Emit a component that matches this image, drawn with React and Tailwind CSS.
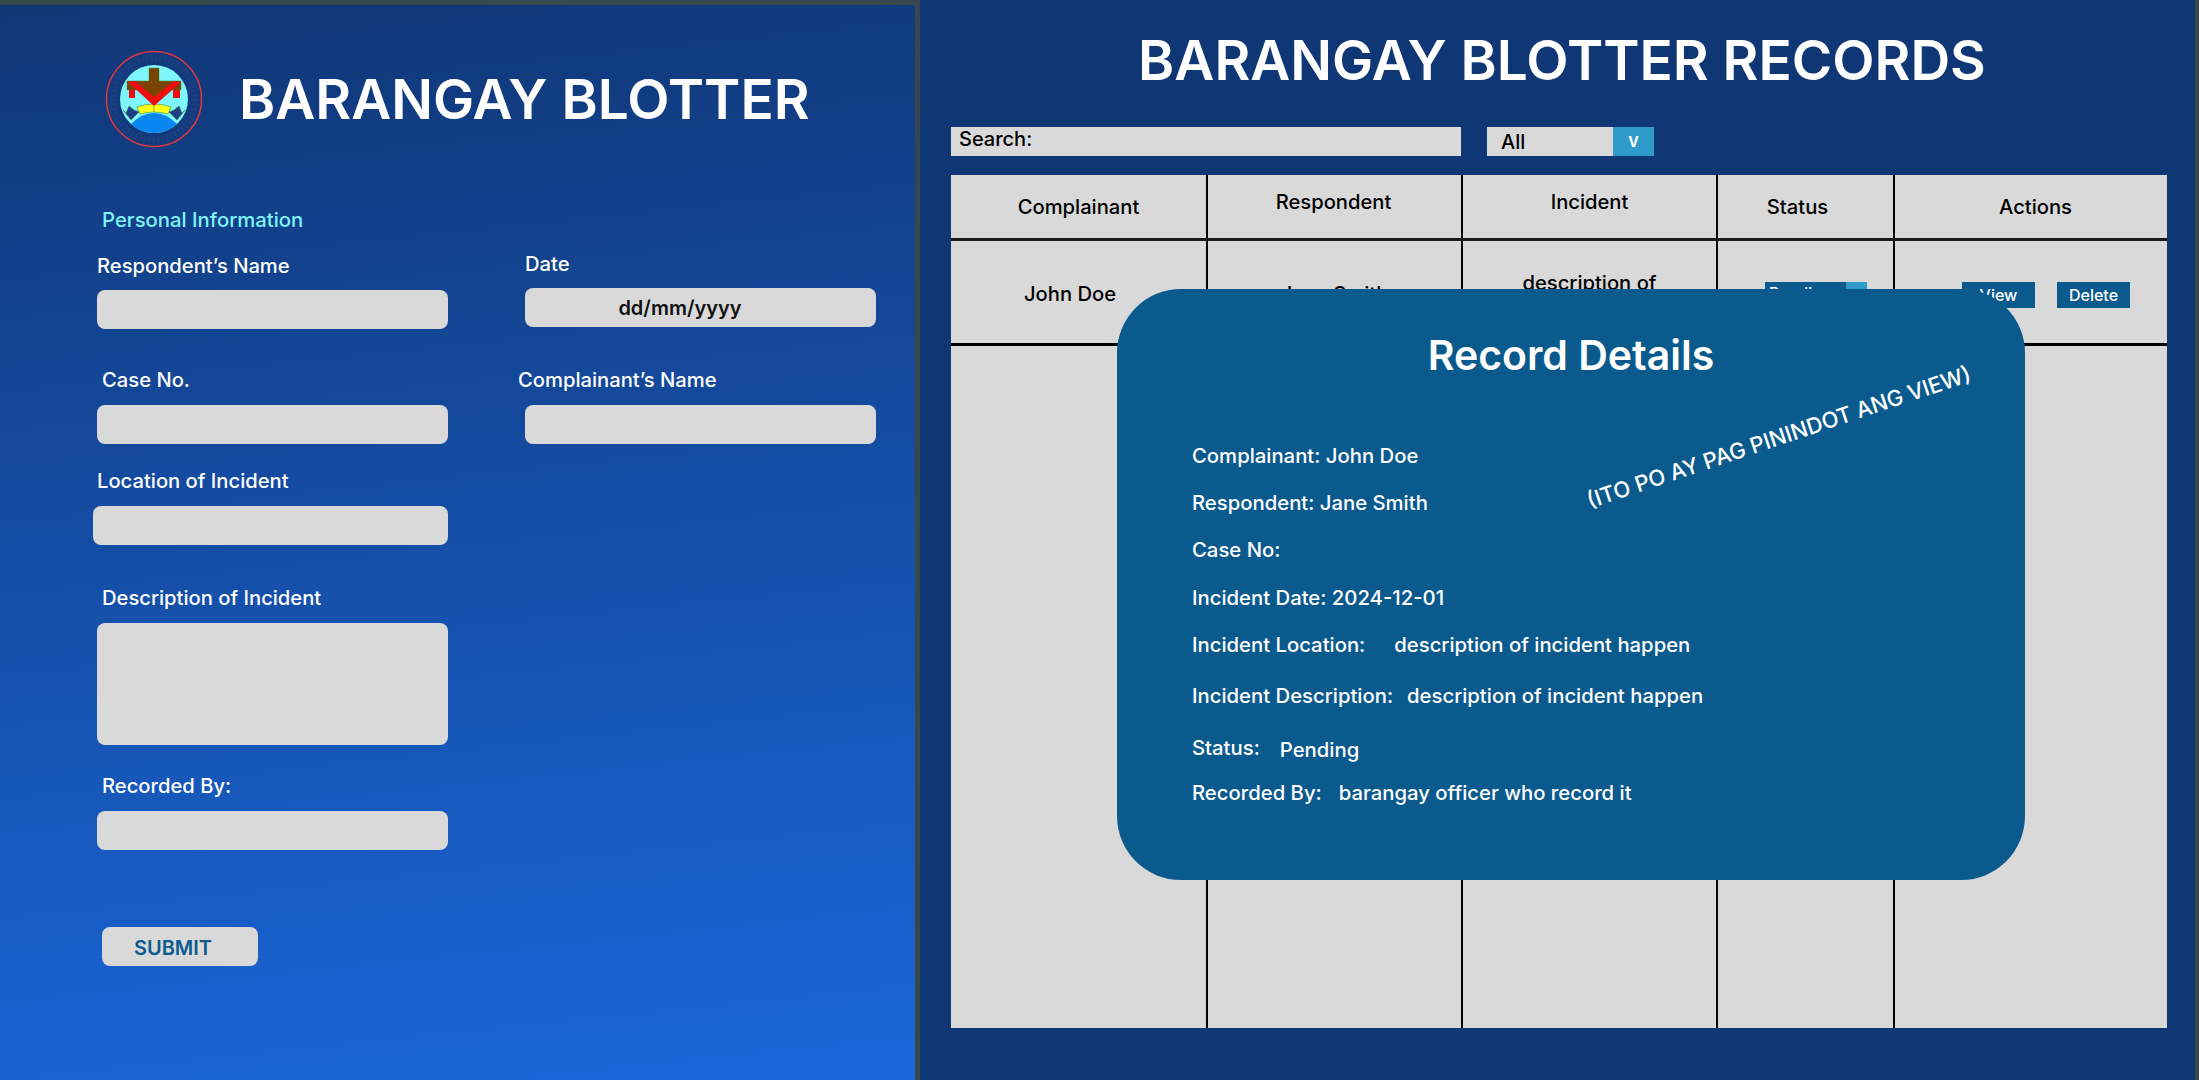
const font = { fontFamily: "Inter, sans-serif" };

const Logo = () => (
  <svg width="100" height="100" viewBox="0 0 100 100" className="shrink-0">
    <circle cx="50" cy="50" r="47.5" fill="#123a7c" stroke="#e0383e" strokeWidth="1.5" />
    <circle cx="50" cy="50" r="41" fill="none" stroke="#1a3f80" strokeWidth="7" strokeDasharray="3 1.5" />
    <circle cx="50" cy="50" r="34" fill="#7ff6fb" />
    <path d="M27 75 A34 34 0 0 0 73 75 Q62 64 50 64 Q38 64 27 75 Z" fill="#0a86f0" />
    <path d="M19 61 L22 64 L25 57 L30 61 L35 63 L27 71 Z M81 61 L78 64 L75 57 L70 61 L65 63 L73 71 Z" fill="#1d3f8a" stroke="#3f8a3a" strokeWidth="0.6" />
    <path d="M33 58 Q41 55 50 55 Q59 55 67 58 L64 65 Q57 63 50 63 Q43 63 36 65 Z" fill="#ffff1a" stroke="#3f8a3a" strokeWidth="0.6" />
    <path d="M50 55 V63" stroke="#3f8a3a" strokeWidth="0.6" />
    <path d="M45 19 H55 V32 H77 V41 H62 L50 52 L38 41 H23 V32 H45 Z" fill="#7a4300" stroke="#3f8a3a" strokeWidth="0.5" />
    <path d="M25 41 H31 V49 H25 Z M69 41 H76 V49 H69 Z" fill="#f00d0d" />
    <path d="M24 33 L31 32 L50 48 L70 32 L77 33 L50 57 Z" fill="#f00d0d" />
  </svg>
);

const Field = ({ label, className = "", labelClass = "", inputClass = "h-[39px]", children }) => (
  <div className={className}>
    <div className={`text-[20.2px] leading-[24px] font-[550] text-white ${labelClass}`}>{label}</div>
    <div className={`bg-[#d9d9d9] rounded-[8px] flex items-center justify-center ${inputClass}`}>
      {children}
    </div>
  </div>
);

const FormPanel = () => (
  <div className="w-[915px] h-[1075px] shrink-0 bg-linear-[174deg] from-[#103675] to-[#1a67da] flex flex-col">
    <div className="flex items-center pl-[104px] pt-[44px]">
      <Logo />
      <h1 className="ml-[35px] text-[55px] leading-[64px] font-semibold text-white">BARANGAY BLOTTER</h1>
    </div>
    <div className="ml-[102px] mt-[59px] text-[20.3px] leading-[24px] font-[550] text-[#7ef3f7]">Personal Information</div>
    <div className="grid grid-cols-[351px_351px] gap-x-[77px] ml-[97px] mt-[22px]">
      <Field label="Respondent’s Name" inputClass="h-[39px] mt-[12px]" />
      <Field label="Date" inputClass="h-[39px] mt-[12px]" className="-mt-[2px]">
        <span className="text-[20px] font-semibold text-[#111] pr-[41px]">dd/mm/yyyy</span>
      </Field>
      <Field label="Case No." labelClass="pl-[5px]" inputClass="h-[39px] mt-[13px]" className="mt-[39px]" />
      <Field label="Complainant’s Name" labelClass="-ml-[7px]" inputClass="h-[39px] mt-[13px]" className="mt-[39px]" />
    </div>
    <div className="ml-[97px] w-[351px]">
      <Field label="Location of Incident" inputClass="h-[39px] mt-[13px] -ml-[4px]" className="mt-[25px]" />
      <Field label="Description of Incident" labelClass="pl-[5px]" inputClass="h-[122px] mt-[13px]" className="mt-[41px]" />
      <Field label="Recorded By:" labelClass="pl-[5px]" inputClass="h-[39px] mt-[13px]" className="mt-[29px]" />
      <button className="mt-[77px] ml-[5px] w-[156px] h-[39px] pr-[14px] pt-[2px] rounded-[8px] bg-[#d9d9d9] text-[20px] font-semibold text-[#0b5a8e]">
        SUBMIT
      </button>
    </div>
  </div>
);

const Select = ({ label, className = "", labelClass = "", arrowClass = "" }) => (
  <div className={`flex items-stretch ${className}`}>
    <div className={`flex-1 flex items-center ${labelClass}`}>{label}</div>
    <div className={`bg-[#2e9bca] text-white flex items-center justify-center ${arrowClass}`}>V</div>
  </div>
);

const columns = "grid grid-cols-[257px_255px_255px_177px_272px]";

const TablePanel = () => (
  <div className="relative flex-1 h-[1080px] bg-[#0f3675] pl-[31px] pr-[27px] flex flex-col">
    <h1 className="pt-[28px] pl-[5px] text-center text-[55px] leading-[64px] font-semibold text-white">
      BARANGAY BLOTTER RECORDS
    </h1>
    <div className="flex gap-[26px] mt-[35px] h-[29px]">
      <div className="w-[510px] bg-[#d9d9d9] px-[8px] text-[20px] leading-[24px] font-[550] text-black">Search:</div>
      <Select
        label="All"
        className="w-[167px] bg-[#d9d9d9] text-[20px] font-[550] text-black"
        labelClass="pl-[14px]"
        arrowClass="w-[41px] text-[14px] font-bold"
      />
    </div>
    <div className="mt-[19px] w-[1216px] h-[853px] bg-[#d9d9d9] flex flex-col text-[20.2px] font-[550] text-black">
      <div className={`${columns} h-[66px] border-b-[3px] border-[#1a1a1a]`}>
        <div className="border-r-[2px] border-black text-center pt-[17px]">Complainant</div>
        <div className="border-r-[2px] border-black text-center pt-[12px] pr-[2px]">Respondent</div>
        <div className="border-r-[2px] border-black text-center pt-[12px]">Incident</div>
        <div className="border-r-[2px] border-black text-center pt-[17px] pr-[16px]">Status</div>
        <div className="text-center pt-[17px] pl-[9px]">Actions</div>
      </div>
      <div className={`${columns} h-[105px] border-b-[3px] border-black`}>
        <div className="border-r-[2px] border-black text-center pt-[38px] pr-[17px]">John Doe</div>
        <div className="border-r-[2px] border-black text-center pt-[38px]">Jane Smith</div>
        <div className="border-r-[2px] border-black text-center pt-[30px] leading-[24px] px-[46px]">description of incident happen</div>
        <div className="border-r-[2px] border-black pl-[47px] pt-[41px]">
          <Select
            label="Pending"
            className="w-[102px] h-[26px] bg-[#0b5a8e] text-white text-[16px]"
            labelClass="pl-[4px] pb-[4px]"
            arrowClass="w-[21px] text-[13px]"
          />
        </div>
        <div className="flex gap-[22px] pl-[67px] pt-[41px]">
          <button className="w-[73px] h-[26px] bg-[#0b5a8e] text-white text-[16px]">View</button>
          <button className="w-[73px] h-[26px] bg-[#0b5a8e] text-white text-[16px]">Delete</button>
        </div>
      </div>
      <div className={`${columns} flex-1`}>
        <div className="border-r-[2px] border-black" />
        <div className="border-r-[2px] border-black" />
        <div className="border-r-[2px] border-black" />
        <div className="border-r-[2px] border-black" />
        <div />
      </div>
    </div>
    {/* record details popup, opens over the table */}
    <div className="absolute left-[197px] top-[289px] w-[908px] h-[591px] rounded-[64px] bg-[#0b5a8e] text-white text-[20.3px] font-[550] pl-[75px]">
      <h2 className="text-center text-[41px] leading-[48px] pr-[75px] pt-[42px] font-semibold">Record Details</h2>
      <div className="flex flex-col mt-[53px]">
        <div className="h-[47px] leading-[47px]">Complainant: John Doe</div>
        <div className="h-[47px] leading-[47px]">Respondent: Jane Smith</div>
        <div className="h-[48px] leading-[47px]">Case No:</div>
        <div className="h-[47px] leading-[47px]">Incident Date: 2024-12-01</div>
        <div className="h-[50px] leading-[47px]">Incident Location:<span className="ml-[29px]">description of incident happen</span></div>
        <div className="h-[52px] leading-[49px]">Incident Description:<span className="ml-[14px]">description of incident happen</span></div>
        <div className="h-[46px] leading-[49px]">Status:<span className="ml-[20px] relative top-[2px]">Pending</span></div>
        <div className="h-[47px] leading-[47px]">Recorded By:<span className="ml-[17px]">barangay officer who record it</span></div>
      </div>
      <div className="absolute left-[460px] top-[136px] text-[22px] leading-[24px] whitespace-nowrap -rotate-[18.5deg] origin-center">
        (ITO PO AY PAG PININDOT ANG VIEW)
      </div>
    </div>
  </div>
);

export default function App() {
  return (
    <div style={font} className="w-[2199px] h-[1080px] overflow-hidden flex flex-col bg-[#37474a]">
      <div className="flex h-[1080px] gap-[5px] pr-[4px]">
        <div className="pt-[5px]">
          <FormPanel />
        </div>
        <TablePanel />
      </div>
    </div>
  );
}
